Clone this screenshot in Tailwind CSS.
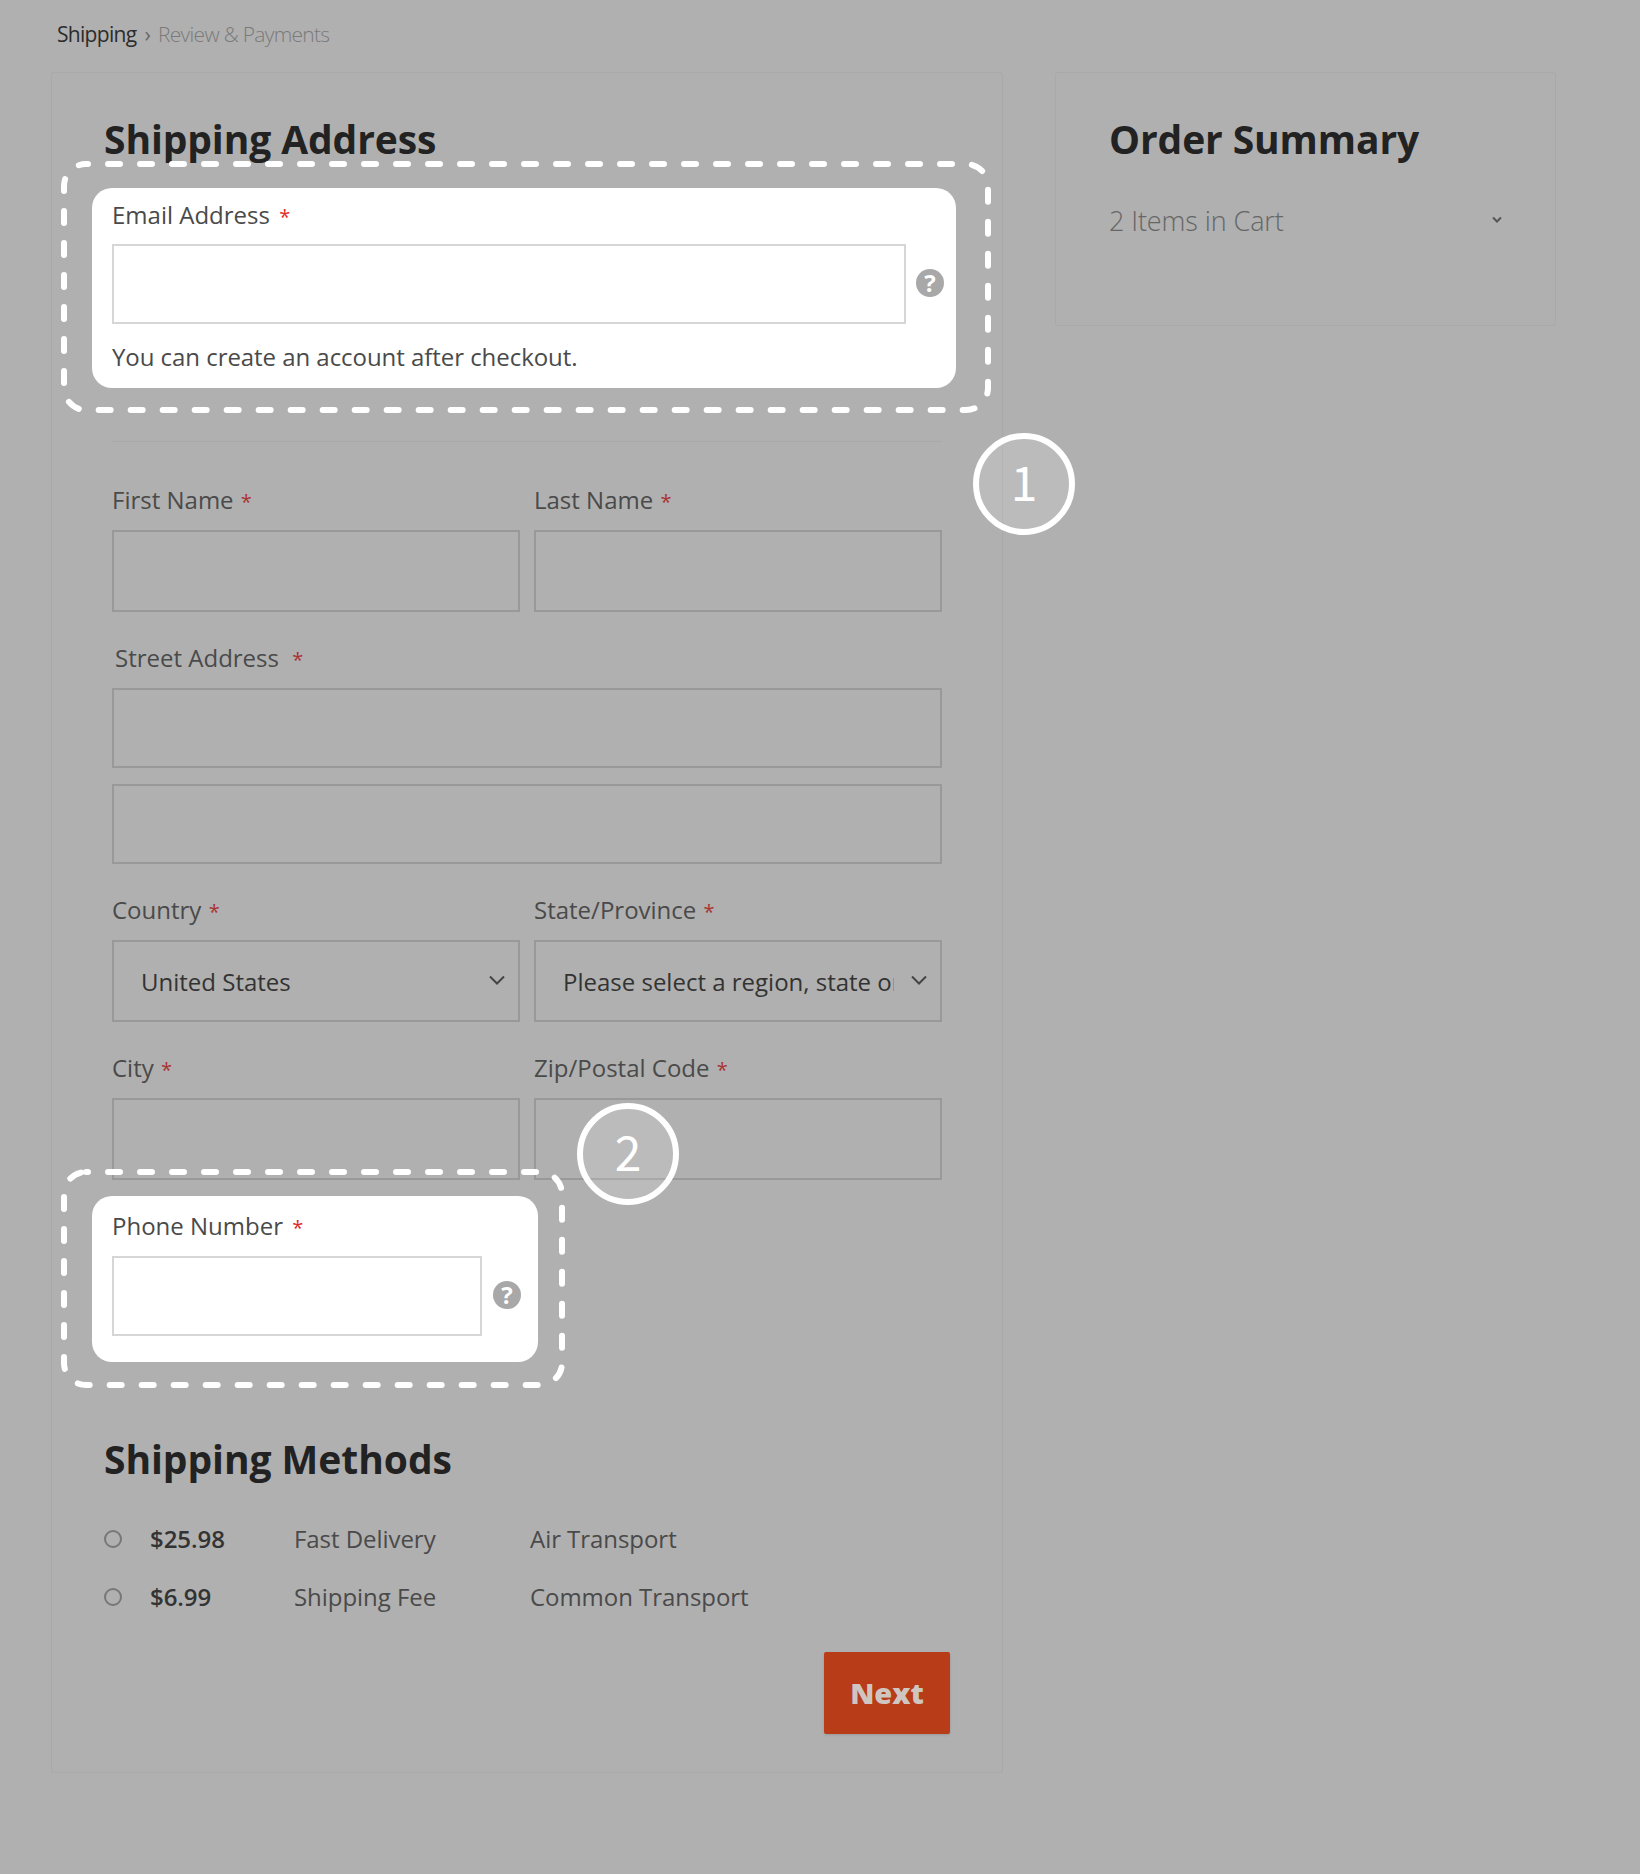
<!DOCTYPE html>
<html lang="en">
<head>
    <meta charset="UTF-8">
    <title>Checkout</title>
    <script src="https://cdn.jsdelivr.net/npm/@tailwindcss/browser@4"></script>
</head>
<body class="bg-[#b0b0b0] font-['Open_Sans',sans-serif] text-[#4a4a4a] w-[1640px] h-[1874px] overflow-hidden">
    <div class="h-[72px] pl-[57px] pt-[19px] flex items-start text-[21px] leading-[30px] tracking-[-0.7px]">
        <span class="text-[#2c2c2c] font-medium">Shipping</span>
        <span class="text-[#666] mx-[8px]">›</span>
        <span class="text-[#7a7a7a] font-light">Review &amp; Payments</span>
    </div>

    <div class="flex items-start pl-[51px] gap-[52px]">
        <!-- main column -->
        <main class="relative w-[952px] h-[1701px] border border-[#a9a9a9] rounded-[3px] pt-[44px] shrink-0">
            <h2 class="ml-[52px] h-[44px] leading-[44px] text-[39px] font-bold text-[#222] tracking-[-0.1px]">Shipping Address</h2>

            <!-- email highlight -->
            <section class="relative ml-[40px] mt-[27px] w-[864px] h-[200px] bg-white rounded-[20px] pt-[11px] pl-[20px]">
                <svg class="absolute left-[-31px] top-[-27px]" width="930" height="252" fill="none">
                    <rect x="3" y="3" width="924" height="246" rx="22" stroke="#fff" stroke-width="6" stroke-linecap="round" stroke-dasharray="12 20" stroke-dashoffset="10"></rect>
                </svg>
                <label class="block h-[32px] leading-[32px] text-[24px]">Email Address <span class="text-[#e02b27] text-[20px] ml-[3px]">*</span></label>
                <div class="flex items-center mt-[13px]">
                    <input type="text" class="w-[794px] h-[80px] bg-white border-2 border-[#d6d6d6]">
                    <span class="ml-[10px] mb-[2px] w-[28px] h-[28px] rounded-full bg-[#a8a8a8] text-white text-[24px] leading-none font-bold flex items-center justify-center">?</span>
                </div>
                <p class="mt-[17px] h-[32px] leading-[32px] text-[24px] tracking-[-0.05px]">You can create an account after checkout.</p>
            </section>

            <hr class="ml-[60px] mt-[53px] w-[830px] border-t border-[#a9a9a9]">

            <div class="ml-[60px] w-[830px]">
                <div class="grid grid-cols-[408px_408px] gap-x-[14px] mt-[43px]">
                    <div>
                        <label class="block h-[32px] leading-[30px] text-[24px]">First Name <span class="text-[#a33] text-[20px] ml-[1px]">*</span></label>
                        <input type="text" class="block mt-[13px] w-full h-[82px] border-2 border-[#999]">
                    </div>
                    <div>
                        <label class="block h-[32px] leading-[30px] text-[24px]">Last Name <span class="text-[#a33] text-[20px] ml-[1px]">*</span></label>
                        <input type="text" class="block mt-[13px] w-full h-[82px] border-2 border-[#999]">
                    </div>
                </div>

                <div class="mt-[31px]">
                    <label class="block pl-[3px] h-[32px] leading-[30px] text-[24px]">Street Address <span class="text-[#a33] text-[20px] ml-[7px]">*</span></label>
                    <input type="text" class="block mt-[13px] w-full h-[80px] border-2 border-[#999]">
                    <input type="text" class="block mt-[16px] w-full h-[80px] border-2 border-[#999]">
                </div>

                <div class="grid grid-cols-[408px_408px] gap-x-[14px] mt-[31px]">
                    <div>
                        <label class="block h-[32px] leading-[30px] text-[24px]">Country <span class="text-[#a33] text-[20px] ml-[1px]">*</span></label>
                        <div class="relative mt-[13px]">
                            <select class="block w-full h-[82px] border-2 border-[#999] appearance-none pl-[27px] pr-[46px] pt-[2px] text-[24px] text-[#333]">
                                <option>United States</option>
                            </select>
                            <svg class="absolute right-[15px] top-[35px]" width="16" height="10" fill="none" viewBox="0 0 16 10"><path d="M1 1.5 8 8.5 15 1.5" stroke="#444" stroke-width="2"/></svg>
                        </div>
                    </div>
                    <div>
                        <label class="block h-[32px] leading-[30px] text-[24px]">State/Province <span class="text-[#a33] text-[20px] ml-[1px]">*</span></label>
                        <div class="relative mt-[13px]">
                            <select class="block w-full h-[82px] border-2 border-[#999] appearance-none pl-[27px] pr-[46px] pt-[2px] text-[24px] text-[#333]">
                                <option>Please select a region, state or province.</option>
                            </select>
                            <svg class="absolute right-[15px] top-[35px]" width="16" height="10" fill="none" viewBox="0 0 16 10"><path d="M1 1.5 8 8.5 15 1.5" stroke="#444" stroke-width="2"/></svg>
                        </div>
                    </div>
                </div>

                <div class="grid grid-cols-[408px_408px] gap-x-[14px] mt-[31px]">
                    <div>
                        <label class="block h-[32px] leading-[30px] text-[24px]">City <span class="text-[#a33] text-[20px] ml-[1px]">*</span></label>
                        <input type="text" class="block mt-[13px] w-full h-[82px] border-2 border-[#999]">
                    </div>
                    <div>
                        <label class="block h-[32px] leading-[30px] text-[24px]">Zip/Postal Code <span class="text-[#a33] text-[20px] ml-[1px]">*</span></label>
                        <input type="text" class="block mt-[13px] w-full h-[82px] border-2 border-[#999]">
                    </div>
                </div>
            </div>

            <!-- phone highlight -->
            <section class="relative ml-[40px] mt-[16px] w-[446px] h-[166px] bg-white rounded-[20px] pt-[15px] pl-[20px]">
                <svg class="absolute left-[-31px] top-[-27px]" width="504" height="219" fill="none">
                    <rect x="3" y="3" width="498" height="213" rx="22" stroke="#fff" stroke-width="6" stroke-linecap="round" stroke-dasharray="12 20" stroke-dashoffset="10"></rect>
                </svg>
                <label class="block h-[32px] leading-[30px] text-[24px]">Phone Number <span class="text-[#e02b27] text-[20px] ml-[3px]">*</span></label>
                <div class="flex items-center mt-[13px]">
                    <input type="text" class="w-[370px] h-[80px] bg-white border-2 border-[#d6d6d6]">
                    <span class="ml-[11px] mb-[2px] w-[28px] h-[28px] rounded-full bg-[#a8a8a8] text-white text-[24px] leading-none font-bold flex items-center justify-center">?</span>
                </div>
            </section>

            <h2 class="ml-[52px] mt-[75px] h-[44px] leading-[44px] text-[39px] font-bold text-[#222] tracking-[-0.05px]">Shipping Methods</h2>

            <div class="ml-[52px] mt-[42px] grid grid-cols-[46px_144px_236px_1fr] auto-rows-[32px] gap-y-[26px] items-center text-[24px] leading-[30px] tracking-[-0.05px]">
                <span class="w-[18px] h-[18px] rounded-full border-2 border-[#777]"></span>
                <span class="font-semibold text-[#333]">$25.98</span>
                <span>Fast Delivery</span>
                <span>Air Transport</span>
                <span class="w-[18px] h-[18px] rounded-full border-2 border-[#777]"></span>
                <span class="font-semibold text-[#333]">$6.99</span>
                <span>Shipping Fee</span>
                <span>Common Transport</span>
            </div>

            <div class="flex justify-end mr-[52px] mt-[39px]">
                <button class="w-[126px] h-[82px] rounded-[2px] bg-[#b83c17] text-[#cfc6c2] text-[29px] font-extrabold shadow-sm">Next</button>
            </div>

            <!-- step numbers -->
            <div class="absolute left-[921px] top-[360px] w-[102px] h-[102px] rounded-full border-[6px] border-white bg-white/15 text-white font-['Noto_Sans_CJK_KR',sans-serif] text-[48px] pb-[9px] flex items-center justify-center">1</div>
            <div class="absolute left-[525px] top-[1030px] w-[102px] h-[102px] rounded-full border-[6px] border-white bg-white/15 text-white font-['Noto_Sans_CJK_KR',sans-serif] text-[48px] pb-[9px] flex items-center justify-center">2</div>
        </main>

        <!-- summary column -->
        <aside class="w-[501px] h-[254px] border border-[#a9a9a9] rounded-[3px] pt-[44px] pl-[53px] pr-[52px] shrink-0">
            <h2 class="h-[44px] leading-[44px] text-[39px] font-bold text-[#222] tracking-[-0.1px]">Order Summary</h2>
            <div class="flex items-center justify-between mt-[40px] h-[40px]">
                <span class="text-[27px] font-light text-[#666] tracking-[-0.1px]">2 Items in Cart</span>
                <svg class="mb-[2px]" width="12" height="8" fill="none" viewBox="0 0 12 8"><path d="M2 1.5 6 5.5 10 1.5" stroke="#555" stroke-width="2"/></svg>
            </div>
        </aside>
    </div>
</body>
</html>
